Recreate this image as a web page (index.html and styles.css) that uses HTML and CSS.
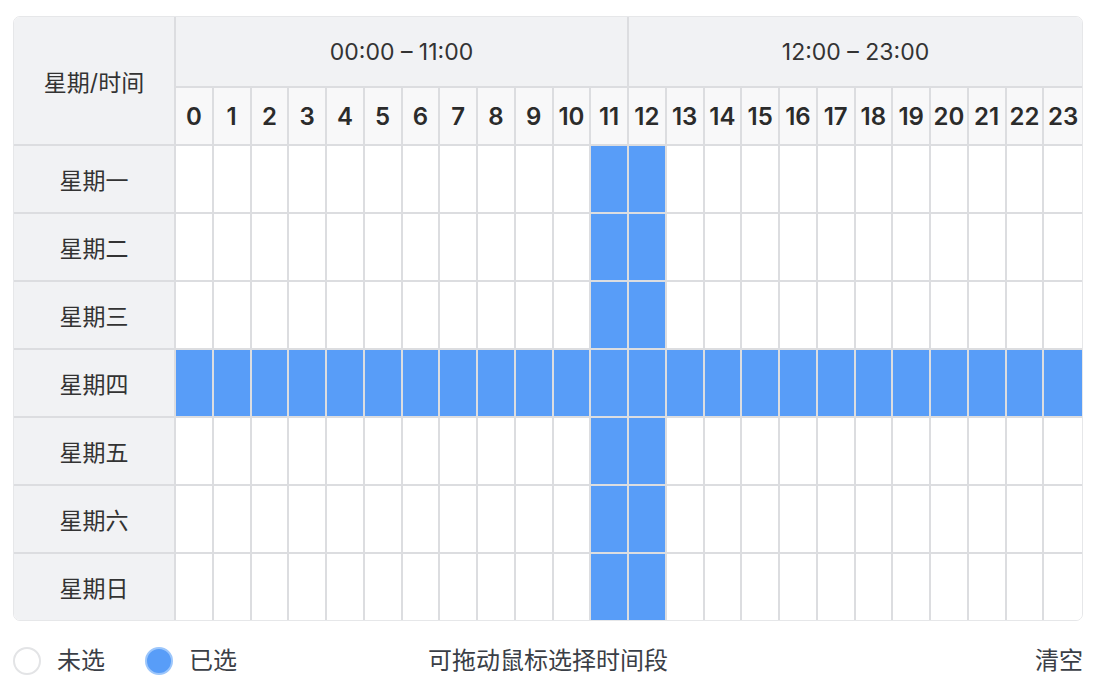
FILE: index.html
```html
<!DOCTYPE html>
<html lang="zh-CN">
<head>
<meta charset="utf-8">
<title>时间段选择</title>
<link rel="stylesheet" href="styles.css">
</head>
<body>
<div class="page">
  <div class="grid-wrap">
    <table class="schedule">
      <colgroup>
        <col class="col-day">
      </colgroup>
      <thead>
        <tr class="row-range">
          <th class="corner" rowspan="2">星期/时间</th>
          <th class="range" colspan="12">00:00 – 11:00</th>
          <th class="range last" colspan="12">12:00 – 23:00</th>
        </tr>
        <tr class="row-hours">
          <th class="hour">0</th><th class="hour">1</th><th class="hour">2</th><th class="hour">3</th><th class="hour">4</th><th class="hour">5</th><th class="hour">6</th><th class="hour">7</th><th class="hour">8</th><th class="hour">9</th><th class="hour">10</th><th class="hour">11</th><th class="hour">12</th><th class="hour">13</th><th class="hour">14</th><th class="hour">15</th><th class="hour">16</th><th class="hour">17</th><th class="hour">18</th><th class="hour">19</th><th class="hour">20</th><th class="hour">21</th><th class="hour">22</th><th class="hour last">23</th>
        </tr>
      </thead>
      <tbody id="body"></tbody>
    </table>
  </div>
  <div class="footer">
    <div class="legend">
      <span class="dot"></span><span class="legend-text">未选</span>
      <span class="dot on"></span><span class="legend-text">已选</span>
    </div>
    <div class="tip">可拖动鼠标选择时间段</div>
    <div class="clear">清空</div>
  </div>
</div>
<script src="app.js"></script>
</body>
</html>
```

FILE: app.js
```js
(function () {
  var days = ['星期一', '星期二', '星期三', '星期四', '星期五', '星期六', '星期日'];
  var body = document.getElementById('body');
  var html = '';
  days.forEach(function (d, i) {
    html += '<tr class="row-day' + (i === days.length - 1 ? ' last-row' : '') + '"><th class="day">' + d + '</th>';
    for (var h = 0; h < 24; h++) {
      var on = (i === 3) || h === 11 || h === 12;
      html += '<td class="cell' + (on ? ' on' : '') + (h === 23 ? ' last' : '') + '"></td>';
    }
    html += '</tr>';
  });
  body.innerHTML = html;
})();
```

FILE: styles.css
```css
html, body {
  margin: 0;
  padding: 0;
  background: #ffffff;
}

body {
  font-family: Inter, "Noto Sans CJK SC", sans-serif;
  color: #333333;
}

.page {
  width: 1083px;
  height: 692px;
  box-sizing: border-box;
  padding: 16px 0 0 13px;
}

.grid-wrap {
  border: 1px solid #e6e7e9;
  border-radius: 7px;
  overflow: hidden;
}

.schedule {
  width: 100%;
  table-layout: fixed;
  border-collapse: separate;
  border-spacing: 0;
}

.col-day {
  width: 162px;
}

.schedule th,
.schedule td {
  box-sizing: border-box;
  padding: 0;
  border-right: 2px solid #dcdde0;
  border-bottom: 2px solid #dcdde0;
  text-align: center;
  vertical-align: middle;
}

.schedule .last {
  border-right: none;
}

.corner,
.range,
.day {
  background: #f1f2f4;
  font-weight: 400;
  font-size: 23px;
  color: #333333;
}

.corner {
  padding-bottom: 4px;
}

.row-range th {
  height: 71px;
}

.row-hours th {
  height: 58px;
}

.hour {
  background: #f8f8f9;
  font-size: 24px;
  font-weight: 600;
  color: #2b2b2b;
}

.row-day th,
.row-day td {
  height: 68px;
}

.last-row th,
.last-row td {
  border-bottom: none;
  height: 66px;
}

.cell {
  background: #ffffff;
}

.cell.on {
  background: #589df8;
}

.footer {
  display: grid;
  grid-template-columns: 1fr auto 1fr;
  align-items: center;
  height: 28px;
  line-height: 28px;
  margin-top: 26px;
  font-size: 24px;
  color: #3a3e46;
}

.legend {
  display: flex;
  align-items: center;
}

.dot {
  box-sizing: border-box;
  width: 28px;
  height: 28px;
  border-radius: 50%;
  border: 2px solid #e3e4e6;
  background: #ffffff;
  margin-right: 16px;
}

.dot.on {
  background: #589df8;
  border-color: #9cc6fb;
}

.legend-text {
  margin-right: 40px;
}

.tip {
  text-align: center;
}

.clear {
  text-align: right;
}
```
